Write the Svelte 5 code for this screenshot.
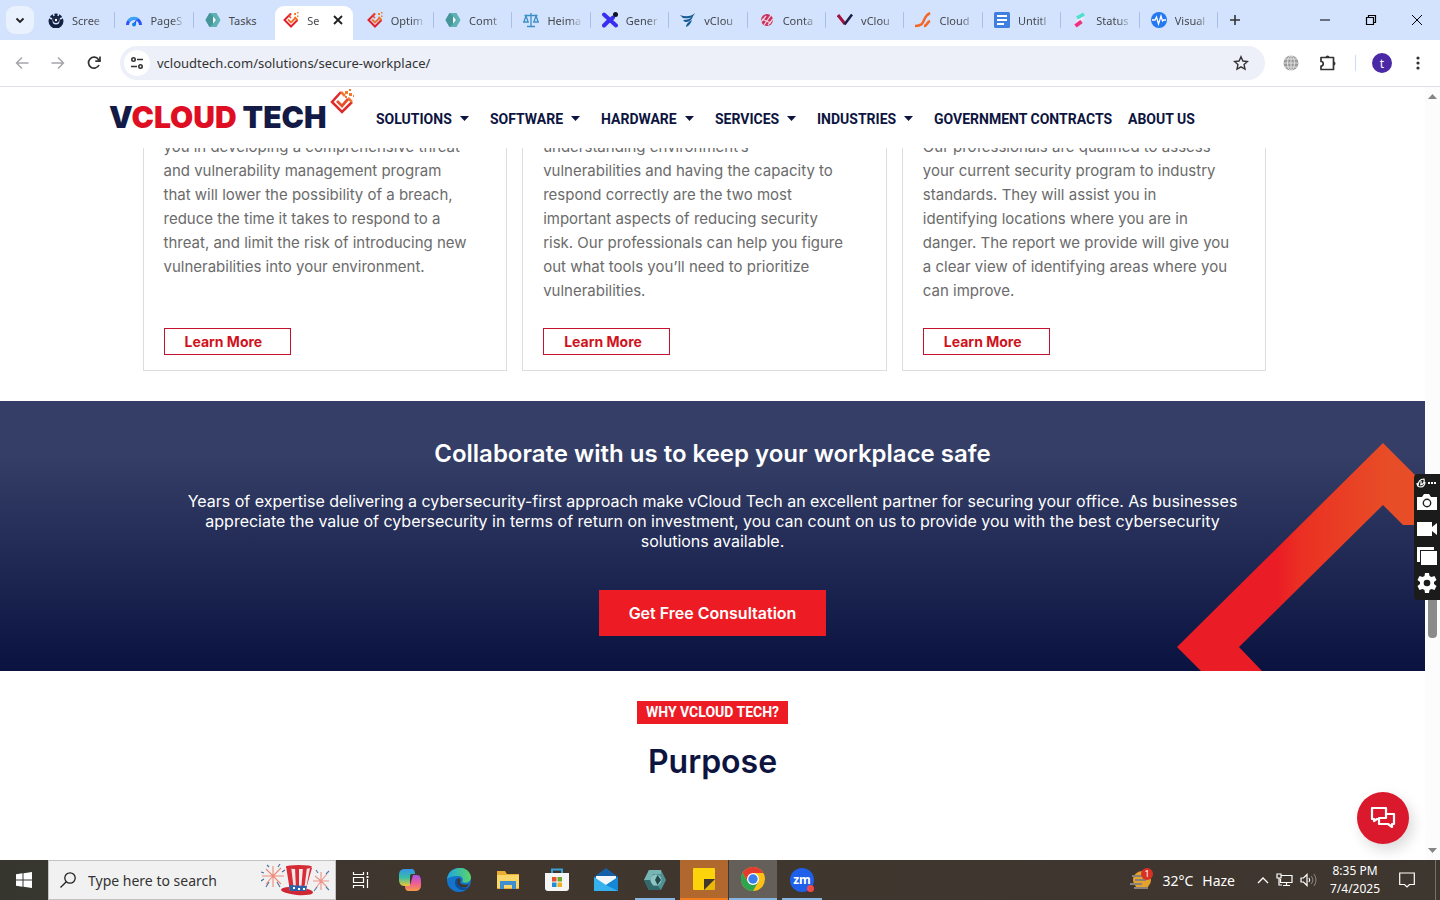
<script lang="ts">
	interface Tab {
		icon: string;
		title: string;
		active?: boolean;
	}

	const diamond =
		'<path d="M8 1.500 1.500 8 8 14.500 14.500 8" fill="none" stroke="#e0202a" stroke-width="2"/><path d="m5 7.500 3 3 4-4M14.500 8 11.500 5" fill="none" stroke="#f0702a" stroke-width="1.800"/><path d="M8 1.500 6 4l2 2" fill="none" stroke="#e5482a" stroke-width="1.500"/><path d="M11 1h2v2h-2zM14 0h1.500v1.500H14zM14 3.500h1.500V5H14z" fill="#f0802a"/>';
	const hex =
		'<path d="M4.500 1h7L15.500 8l-4 7h-7L.5 8z" fill="#5fb0b2"/><path d="M4.500 1 .5 8l4 7 3.500-3V4z" fill="#459699"/><path d="M8 4.500 11 8l-3 3.500z" fill="#f0fafa"/>';

	const icons: Record<string, string> = {
		diamond,
		hex,
		shot: '<circle cx="8" cy="9" r="5.500" fill="none" stroke="#14203f" stroke-width="4"/><circle cx="8" cy="8" r="3" fill="#14203f"/><path d="M0 5 4 7M16 5l-4 2M5 0l1 4M11 0l-1 4" stroke="#d3e3fd" stroke-width="1.500"/><circle cx="8" cy="8" r="1.200" fill="#fff"/>',
		gauge:
			'<path d="M1.500 13a6.500 6.500 0 0 1 13 0" fill="none" stroke="#2f50ff" stroke-width="3"/><path d="M2.500 9a6.500 6.500 0 0 1 9-1.500" fill="none" stroke="#39a6f5" stroke-width="3"/><path d="m7 12 4-5-1.500 6z" fill="#1457e6"/><circle cx="8" cy="12.500" r="2" fill="#1483e6"/>',
		scales:
			'<path d="M8 1v13M4 14.500h8M1.500 3.500h13M3 4 .8 10h4.400zM13 4l-2.200 6h4.400z" fill="none" stroke="#3c8fc4" stroke-width="1.300"/>',
		cross:
			'<path d="m2 2.500 12 11M2 13.500l4-4M10 6.500l1-1" fill="none" stroke="#3a2ff0" stroke-width="4" stroke-linecap="round"/><circle cx="13.500" cy="2.500" r="2.500" fill="#101020"/>',
		wing: '<path d="M0 3c5 2 11 2 15-2-2 5-7 6-12 5zM3 8c4 0 7-1 10-4-1 4-4 6-8 6zM6 15c0-3 2-5 6-7-1 3-3 6-6 7z" fill="#165a94"/>',
		ball: '<circle cx="8" cy="8" r="6" fill="#c8325c"/><path d="m2 10 5-6M5 13l7-10M9 13l5-6M3 7l9 4" stroke="#f3d5e2" stroke-width="1.300"/>',
		vee: '<path d="m1 3 7 9" stroke="#a3123c" stroke-width="3"/><path d="m7.500 12.500 7.500-10" stroke="#1d1d4b" stroke-width="2.500"/>',
		flare:
			'<path d="M0 14c8 0 8-4 10-8 1-3 3-4 5-5M9 14c3 0 3-4 6-5" fill="none" stroke="#f2682a" stroke-width="2.600"/>',
		docs: '<rect width="16" height="16" rx="1.500" fill="#3f7fe0"/><path d="M3 4h10M3 8h10M3 12h7" stroke="#fff" stroke-width="1.800"/>',
		status:
			'<path d="m5 6 7-4" stroke="#4fe0cf" stroke-width="3.500"/><path d="M4 9.500 12 6" stroke="#f6e8f3" stroke-width="2"/><path d="m3.500 14 6-4.500" stroke="#ee3280" stroke-width="4"/>',
		pulse:
			'<circle cx="8" cy="8" r="8" fill="#2478f2"/><path d="M1 8h3l1.500-3 2 7L10 4l1.500 5 1-1H15" fill="none" stroke="#fff" stroke-width="1.300"/>'
	};

	const tabs: Tab[] = [
		{ icon: 'shot', title: 'Scree' },
		{ icon: 'gauge', title: 'PageS' },
		{ icon: 'hex', title: 'Tasks' },
		{ icon: 'diamond', title: 'Se', active: true },
		{ icon: 'diamond', title: 'Optim' },
		{ icon: 'hex', title: 'Comt' },
		{ icon: 'scales', title: 'Heima' },
		{ icon: 'cross', title: 'Gener' },
		{ icon: 'wing', title: 'vClou' },
		{ icon: 'ball', title: 'Conta' },
		{ icon: 'vee', title: 'vClou' },
		{ icon: 'flare', title: 'Cloud' },
		{ icon: 'docs', title: 'Untitl' },
		{ icon: 'status', title: 'Status' },
		{ icon: 'pulse', title: 'Visual' }
	];

	const menu = [
		{ label: 'SOLUTIONS', sub: true },
		{ label: 'SOFTWARE', sub: true },
		{ label: 'HARDWARE', sub: true },
		{ label: 'SERVICES', sub: true },
		{ label: 'INDUSTRIES', sub: true },
		{ label: 'GOVERNMENT CONTRACTS', sub: false },
		{ label: 'ABOUT US', sub: false }
	];

	const cards = [
		`you in developing a comprehensive threat
and vulnerability management program
that will lower the possibility of a breach,
reduce the time it takes to respond to a
threat, and limit the risk of introducing new
vulnerabilities into your environment.`,
		`understanding environment’s
vulnerabilities and having the capacity to
respond correctly are the two most
important aspects of reducing security
risk. Our professionals can help you figure
out what tools you’ll need to prioritize
vulnerabilities.`,
		`Our professionals are qualified to assess
your current security program to industry
standards. They will assist you in
identifying locations where you are in
danger. The report we provide will give you
a clear view of identifying areas where you
can improve.`
	];

	const apps = [
		{
			name: 'Task View',
			state: '',
			svg: '<path d="M4.500 4v2.500h10V4M4.500 20v-2.500h10V20M4.500 9.500h10v5h-10zM18.500 4v3M18.500 11v9" fill="none" stroke="#fff" stroke-width="1.200"/><path d="M17.500 8h2v2h-2z" fill="#fff"/>'
		},
		{
			name: 'Copilot',
			state: '',
			svg: '<path d="M7 1h7c2 0 3 2 3 5h-3c-2 0-2 1-2 4v8H6c-3 0-5-3-5-6V7c0-4 2-6 6-6z" fill="url(#cpa)"/><path d="M17 23h-6c-3 0-4-2-4-5h3c2 0 2-1 3-4l2-7h4c3 0 4 3 4 6v4c0 4-2 6-6 6z" fill="url(#cpb)"/>'
		},
		{
			name: 'Microsoft Edge',
			state: '',
			svg: '<circle cx="12" cy="12" r="12" fill="#1474cc"/><path d="M0 11C2-3 22-4 24 9c0 5-5 7-9 5 2-3 0-6-4-6C6 8 2 9 0 11z" fill="url(#edge)"/><path d="M10 10c-5 5 0 13 7 12 2 0 4-1 5-3-4 2-9 1-10-4z" fill="#0b4e9e"/><path d="M11 10c3 0 3 3 2 5 2 2 6 2 9 1l-2 3c-6 2-12-3-9-9z" fill="#40362e"/>'
		},
		{
			name: 'File Explorer',
			state: '',
			svg: '<path d="M1 3h8l2 3h12v15H1z" fill="#e9ae32"/><path d="M1 7h22v13H1z" fill="#fbd668"/><path d="M4 13h16v8h-4v-4H8v4H4z" fill="#3f8fd0"/>'
		},
		{
			name: 'Microsoft Store',
			state: '',
			svg: '<path d="M7 6V1.500h10V6" fill="none" stroke="#39a2d8" stroke-width="2"/><path d="M0 5h24v15c0 2-1 3-3 3H3c-2 0-3-1-3-3z" fill="#f5f5f5"/><path d="M7 9h4.500v4.500H7z" fill="#e8502a"/><path d="M12.500 9H17v4.500h-4.500z" fill="#6ea92e"/><path d="M7 14.500h4.500V19H7z" fill="#258bd2"/><path d="M12.500 14.500H17V19h-4.500z" fill="#edb020"/>'
		},
		{
			name: 'Mail',
			state: '',
			svg: '<path d="M0 9 12 0l12 9v4H0z" fill="#1560a8"/><path d="M2 8h20v9H2z" fill="#f4f7fa"/><path d="M0 9l12 8L24 9v14H0z" fill="#35b2ee"/><path d="M24 9v14L12 17z" fill="#1488d6"/>'
		},
		{
			name: 'Time tracker',
			state: 'open',
			svg: '<path d="M6 2h12l5 10-5 10H6L1 12z" fill="#4f9294"/><path d="M6 2 1 12h6l3-6h8V2z" fill="#78b6b5"/><path d="M7 12 1 12l5 10h12l-3-4h-5z" fill="#33696d"/><circle cx="13" cy="12" r="5.500" fill="#8dc4c1"/><path d="m14.500 7 3.500 5-3.500 5-2.500-5z" fill="#24494d"/>'
		},
		{
			name: 'Sticky Notes',
			state: 'alert',
			svg: '<path d="M2 1h20q1 0 1 1v10L12 23H2q-1 0-1-1V2q0-1 1-1z" fill="#fbd40b"/><path d="M23 12v10q0 1-1 1H12z" fill="#e9b90a"/><path d="M12 12h11L12 23z" fill="#40382a"/>'
		},
		{
			name: 'Google Chrome',
			state: 'focus',
			svg: '<circle cx="12" cy="12" r="12" fill="#fbc116"/><path d="M1.600 6A12 12 0 0 1 22.400 6H12L6.800 15z" fill="#e33b2e"/><path d="M1.600 6A12 12 0 0 0 12 24l5.200-9H6.800z" fill="#2da44e"/><circle cx="12" cy="12" r="6" fill="#fff"/><circle cx="12" cy="12" r="4.700" fill="#3b7ded"/>'
		}
	];
</script>

<svelte:head>
	<title>Secure Workplace</title>
</svelte:head>

<svg class="defs" width="0" height="0" aria-hidden="true">
	<defs>
		<linearGradient id="cpa" x1="0" y1="0" x2="0" y2="1">
			<stop stop-color="#3494e8" />
			<stop offset="0.500" stop-color="#38bea6" />
			<stop offset="1" stop-color="#efc735" />
		</linearGradient>
		<linearGradient id="cpb" x1="0" y1="0" x2="0" y2="1">
			<stop stop-color="#a656e5" />
			<stop offset="0.500" stop-color="#ee5b98" />
			<stop offset="1" stop-color="#f59a44" />
		</linearGradient>
		<linearGradient id="edge">
			<stop stop-color="#1fa5df" />
			<stop offset="1" stop-color="#5ad568" />
		</linearGradient>
	</defs>
</svg>

<div class="screen">
	<div class="tabstrip">
		<button class="tab-search" aria-label="Search tabs">
			<svg width="10" height="10" viewBox="0 0 10 10"><path d="m1.500 3.500 3.500 3.500 3.500-3.500" fill="none" stroke="#1f1f1f" stroke-width="1.800" /></svg>
		</button>
		<div class="tabs">
			{#each tabs as tab, i}
				<button class="tab" class:active={tab.active} class:bare={i === 2}>
					<svg width="16" height="16" viewBox="0 0 16 16">{@html icons[tab.icon]}</svg>
					<span class="tab-title">{tab.title}</span>
					{#if tab.active}
						<svg width="10" height="10" viewBox="0 0 10 10"><path d="m1 1 8 8M9 1 1 9" stroke="#1f1f1f" stroke-width="1.800" /></svg>
					{/if}
				</button>
			{/each}
		</div>
		<button class="new-tab" aria-label="New tab">
			<svg width="12" height="12" viewBox="0 0 12 12"><path d="M6 1v10M1 6h10" stroke="#333" stroke-width="1.600" /></svg>
		</button>
		<div class="window-buttons">
			<button aria-label="Minimize"><svg width="12" height="12" viewBox="0 0 12 12"><path d="M1 6h10" stroke="#000" /></svg></button>
			<button aria-label="Restore"><svg width="12" height="12" viewBox="0 0 12 12"><path d="M1.500 3.500h7v7h-7zM3.500 3.500v-2h7v7h-2" fill="none" stroke="#000" stroke-width="1.200" /></svg></button>
			<button aria-label="Close"><svg width="12" height="12" viewBox="0 0 12 12"><path d="m1 1 10 10M11 1 1 11" stroke="#000" /></svg></button>
		</div>
	</div>

	<div class="toolbar">
		<button aria-label="Back"><svg width="16" height="16" viewBox="0 0 16 16"><path d="M14.500 8H2.500M8 2.500 2.500 8 8 13.500" fill="none" stroke="#a5a7aa" stroke-width="1.500" /></svg></button>
		<button aria-label="Forward"><svg width="16" height="16" viewBox="0 0 16 16"><path d="M1.500 8h12M8 2.500 13.500 8 8 13.500" fill="none" stroke="#a5a7aa" stroke-width="1.500" /></svg></button>
		<button class="reload" aria-label="Reload"><svg width="16" height="16" viewBox="0 0 16 16"><path d="M13 10A5.500 5.500 0 1 1 12.500 4.500L14 6M14 1.500V6.200H9.300" fill="none" stroke="#333" stroke-width="1.700" /></svg></button>
		<div class="omnibox">
			<button class="site-info" aria-label="Site information">
				<svg width="14" height="14" viewBox="0 0 14 14"><g fill="none" stroke="#333" stroke-width="1.600"><circle cx="3.500" cy="3.500" r="1.700" /><path d="M7 3.500h6M1 10.500h6" /><circle cx="10.500" cy="10.500" r="1.700" /></g></svg>
			</button>
			<input aria-label="Address" value="vcloudtech.com/solutions/secure-workplace/" />
			<button class="star" aria-label="Bookmark">
				<svg width="16" height="16" viewBox="0 0 16 16"><path d="m8 1.800 1.900 4.200 4.600.5-3.400 3.100.9 4.500L8 11.800l-4 2.300.9-4.500L1.500 6.500 6.100 6z" fill="none" stroke="#333" stroke-width="1.400" /></svg>
			</button>
		</div>
		<button class="globe" aria-label="Translate extension">
			<svg width="16" height="16" viewBox="0 0 16 16"><circle cx="8" cy="8" r="7.500" fill="#9b9b9b" /><g fill="none" stroke="#eee" stroke-width="0.800"><ellipse cx="8" cy="8" rx="3.500" ry="7.500" /><path d="M8 0v16M0 8h16M1 4h14M1 12h14" /></g></svg>
		</button>
		<button class="puzzle" aria-label="Extensions">
			<svg width="18" height="18" viewBox="0 0 18 18"><path d="M2 3.500h12.500v12H2v-3.500c3 0 3-4.500 0-4.500z" fill="none" stroke="#333" stroke-width="1.700" stroke-linejoin="round" /><path d="M6.500 3.500a2 2 0 0 1 4 0zM14.500 7.500a2 2 0 0 1 0 4z" fill="#333" /></svg>
		</button>
		<span class="divider"></span>
		<button class="avatar" aria-label="Profile t">t</button>
		<button class="more" aria-label="Menu">
			<svg width="4" height="16" viewBox="0 0 4 16" fill="#333"><circle cx="2" cy="3" r="1.600" /><circle cx="2" cy="8" r="1.600" /><circle cx="2" cy="13" r="1.600" /></svg>
		</button>
	</div>

	<div class="viewport">
		<main>
			<header>
				<a class="logo" href="/">
					<span><b>V</b>CLOUD <b>TECH</b></span>
					<svg width="26" height="26" viewBox="0 0 26 26">
						<path d="M12 3 3 13l10 10 10-10" fill="none" stroke="#dd2a2b" stroke-width="2.500" />
						<path d="m12 3 4 4M23 13l-4-4" fill="none" stroke="#ed782f" stroke-width="2.500" />
						<path d="m8 12 5 5 6-7" fill="none" stroke="#e84f2c" stroke-width="2.800" />
						<path d="M16 2h3v3h-3zM20 0h2v2h-2zM20 4h3v3h-3zM16 7h2v2h-2zM24 6h1v2h-1z" fill="#ee7b2e" />
					</svg>
				</a>
				<nav>
					{#each menu as item}
						<a href="/{item.label.toLowerCase().replace(' ', '-')}">
							{item.label}
							{#if item.sub}
								<svg width="9" height="5" viewBox="0 0 9 5"><path d="M0 0h9L4.500 5z" fill="#0d1440" /></svg>
							{/if}
						</a>
					{/each}
				</nav>
			</header>

			<section class="services">
				{#each cards as text}
					<article>
						<p>{text}</p>
						<a href="/contact">Learn More</a>
					</article>
				{/each}
			</section>

			<section class="banner">
				<svg class="arrow" width="248" height="228" viewBox="0 0 248 228">
					<defs>
						<linearGradient id="arrow">
							<stop offset="0.400" stop-color="#ea1c25" />
							<stop offset="0.500" stop-color="#eb3023" />
							<stop offset="0.850" stop-color="#e74d26" />
						</linearGradient>
					</defs>
					<path d="M206 0 0 204l24 24h61l-23-24L206 62l20 20h22V42z" fill="url(#arrow)" />
				</svg>
				<h2>Collaborate with us to keep your workplace safe</h2>
				<p>
					Years of expertise delivering a cybersecurity-first approach make vCloud Tech an excellent partner for securing your office. As businesses<br />
					appreciate the value of cybersecurity in terms of return on investment, you can count on us to provide you with the best cybersecurity<br />
					solutions available.
				</p>
				<a href="/consultation">Get Free Consultation</a>
			</section>

			<section class="why">
				<span>WHY VCLOUD TECH?</span>
				<h2>Purpose</h2>
			</section>

			<button class="chat" aria-label="Open chat">
				<svg width="26" height="24" viewBox="0 0 26 24"><g fill="none" stroke="#fff" stroke-width="2.200" stroke-linejoin="round"><path d="M9 13H7l-3 2v-2H2V2h14v6" /><path d="M16 8h8v10h-2v3l-4-3H9v-6h7z" /></g></svg>
			</button>
		</main>

		<div class="scrollbar">
			<svg width="9" height="5" viewBox="0 0 9 5"><path d="M0 5h9L4.500 0z" fill="#858585" /></svg>
			<div class="track"><div class="thumb"></div></div>
			<svg width="9" height="5" viewBox="0 0 9 5"><path d="M0 0h9L4.500 5z" fill="#858585" /></svg>
		</div>

		<div class="recorder">
			<svg width="22" height="10" viewBox="0 0 22 10"><path d="M2 8c0-4 2-7 6-7 1 3-1 6-4 6M1 5c0 3 2 4 4 4s4-2 4-5M5 3v3h2" fill="none" stroke="#fff" stroke-width="1.200" /><path d="M12 4h2v2h-2zM15 4h2v2h-2zM18 4h2v2h-2z" fill="#fff" /></svg>
			<button aria-label="Take screenshot"><svg width="20" height="16" viewBox="0 0 20 16"><path d="M0 3h5l2-3h5l2 3h6v13H0z" fill="#fff" /><circle cx="10" cy="9" r="3.700" fill="#fff" stroke="#222" stroke-width="1.400" /></svg></button>
			<button aria-label="Record video"><svg width="20" height="14" viewBox="0 0 20 14"><path d="M0 0h15v5l5-4v12l-5-4v5H0z" fill="#fff" /></svg></button>
			<button aria-label="Gallery"><svg width="20" height="18" viewBox="0 0 20 18"><path d="M0 0h17v3H3v12H0z" fill="#fff" /><path d="M4 4h16v14H4z" fill="#fff" /></svg></button>
			<button aria-label="Settings"><svg width="20" height="20" viewBox="0 0 20 20"><path d="M8 0h4l.5 3 2 1 3-1 2 4-2.500 2v2l2.500 2-2 4-3-1-2 1-.5 3H8l-.5-3-2-1-3 1-2-4L3 11V9L.5 7l2-4 3 1 2-1z" fill="#fff" /><circle cx="10" cy="10" r="3.300" fill="#1b1b1b" /></svg></button>
		</div>
	</div>

	<div class="taskbar">
		<button class="start" aria-label="Start">
			<svg width="16" height="16" viewBox="0 0 16 16"><path d="m0 2.300 6.500-1v6.200H0zM7.500 1.200 16 0v7.500H7.500zM0 8.500h6.500v6.200L0 13.700zM7.500 8.500H16V16l-8.500-1.200z" fill="#fff" /></svg>
		</button>
		<label class="search">
			<svg width="16" height="16" viewBox="0 0 16 16"><g fill="none" stroke="#222" stroke-width="1.300"><circle cx="10" cy="6" r="5.200" /><path d="M6.300 9.700.5 15.500" /></g></svg>
			<input aria-label="Search" placeholder="Type here to search" />
			<svg width="70" height="32" viewBox="0 0 70 32">
				<g fill="none" stroke-width="1.100">
					<path d="M12 12V2M12 12 5 5M12 12H1M12 12l-7 8M12 12v11M12 12l8 8M12 12h11M12 12l8-8" stroke="#ee8a78" />
					<path d="m8 3-2-2M3 9 0 8M17 3l2-3M8 18l-3 5M16 18l3 5M21 8l3-2M3 15l-3 2" stroke="#4c6c9a" />
					<path d="M60 17V8M60 17l-6-5M60 17h-8M60 17l-5 7M60 17v9M60 17l6 6M60 17h8M60 17l6-7" stroke="#ed9389" />
					<path d="m57 9-2-3M65 10l3-3M56 23l-3 4M65 23l3 3" stroke="#5576a5" />
				</g>
				<ellipse cx="36" cy="27" rx="16" ry="4" transform="rotate(5 36 27)" fill="#cf2834" />
				<path d="m25 2 26 2-6 23H29z" fill="#f3e9e7" />
				<path d="M25 2h5l3 25h-4zM34 3h4v24h-3zM42 3h4l-3 24h-3zM49 4l2 0-6 21z" fill="#d92c38" />
				<path d="m28 21 18 1-1 5H29z" fill="#2c62a9" />
				<ellipse cx="38" cy="3" rx="13" ry="2" fill="#d62a35" />
				<path d="M32 24h2M37 25h2M42 25h2" stroke="#fff" stroke-width="2" />
			</svg>
		</label>
		<div class="apps">
			{#each apps as app}
				<button class={app.state} aria-label={app.name}>
					<svg width="24" height="24" viewBox="0 0 24 24">{@html app.svg}</svg>
				</button>
			{/each}
			<button class="open" aria-label="Zoom"><span class="zoom">zm</span></button>
		</div>
		<div class="tray">
			<button class="weather">
				<svg width="24" height="24" viewBox="0 0 24 24"><circle cx="13" cy="12" r="9" fill="#e5a32e" /><path d="M3 8h11M6 12h11M1 16h12M5 20h14" stroke="#88827b" stroke-width="2" /><circle cx="18" cy="6" r="6" fill="#d93025" /><text x="18" y="9" text-anchor="middle" font-size="9" fill="#fff">1</text></svg>
				<span>32°C</span>
				<span>Haze</span>
			</button>
			<button aria-label="Show hidden icons"><svg width="12" height="8" viewBox="0 0 12 8"><path d="m1 7 5-5 5 5" fill="none" stroke="#fff" stroke-width="1.300" /></svg></button>
			<button aria-label="Network"><svg width="17" height="14" viewBox="0 0 17 14"><path d="M5 2.500h11v7H4.500V6M7 12.500h7M10.500 9.500v3M1 1h4v4H1zM3 5v7h3" fill="none" stroke="#fff" stroke-width="1.200" /></svg></button>
			<button aria-label="Volume"><svg width="17" height="14" viewBox="0 0 17 14"><path d="M1 5h2.500L7 1.500v11L3.500 9H1zM9 5q1.500 2 0 4" fill="none" stroke="#fff" stroke-width="1.200" /><path d="M11.500 3q3 4 0 8M14 1q4 6 0 12" fill="none" stroke="#8f8983" /></svg></button>
			<button class="clock"><span>8:35 PM</span><span>7/4/2025</span></button>
			<button class="notes" aria-label="Notifications"><svg width="16" height="16" viewBox="0 0 16 16"><path d="M.7 1h14.600v11.500h-4.800L8 15l-2.500-2.500H.7z" fill="none" stroke="#fff" stroke-width="1.200" /></svg></button>
			<span class="peek"></span>
		</div>
	</div>
</div>

<style>
	:global(body) {
		margin: 0;
		background: #fff;
	}
	.screen {
		display: flex;
		flex-direction: column;
		height: 100vh;
		overflow: hidden;
		font-family: 'Noto Sans', 'Open Sans', sans-serif;
		font-size: 12px;
	}
	.defs {
		position: absolute;
	}
	.screen :global(*) {
		box-sizing: border-box;
	}
	svg {
		flex: none;
		display: block;
	}
	button {
		display: flex;
		align-items: center;
		justify-content: center;
		flex: none;
		padding: 0;
		border: 0;
		background: none;
		font: inherit;
		color: inherit;
		cursor: pointer;
	}
	input {
		flex: 1;
		min-width: 0;
		padding: 0;
		border: 0;
		outline: 0;
		background: none;
		font: inherit;
	}
	a {
		text-decoration: none;
		color: inherit;
	}

	/* browser chrome */
	.tabstrip {
		display: flex;
		align-items: center;
		flex: none;
		height: 40px;
		padding-left: 6px;
		background: #d3e3fd;
	}
	.tab-search {
		width: 28px;
		height: 28px;
		margin-right: 3px;
		border-radius: 9px;
		background: #eaf1fe;
	}
	.tabs {
		display: flex;
		flex: 1;
		align-self: stretch;
		min-width: 0;
	}
	.tab {
		position: relative;
		flex: 1;
		min-width: 0;
		justify-content: flex-start;
		gap: 8px;
		padding: 0 8px 0 11px;
		font-size: 11px;
		color: #45484d;
	}
	.tab::after {
		content: '';
		position: absolute;
		right: 0;
		width: 1px;
		height: 16px;
		background: #a8c0e8;
	}
	.tab.bare::after,
	.tab.active::after {
		display: none;
	}
	.tab-title {
		flex: 1;
		min-width: 0;
		text-align: left;
		white-space: nowrap;
		mask-image: linear-gradient(to right, #000 60%, transparent);
	}
	.tab.bare .tab-title {
		mask-image: none;
	}
	.tab.active {
		align-self: flex-end;
		height: 34px;
		padding: 0 10px 6px 8px;
		margin: 0 3px;
		border-radius: 9px 9px 0 0;
		background: #fff;
	}
	.new-tab {
		width: 34px;
	}
	.window-buttons {
		display: flex;
		flex: none;
		margin-left: 50px;
	}
	.window-buttons button {
		width: 46px;
		height: 40px;
	}
	.toolbar {
		display: flex;
		align-items: center;
		flex: none;
		height: 47px;
		padding: 0 14px;
		border-bottom: 1px solid #dcdfe3;
		background: #fff;
	}
	.toolbar > button {
		width: 16px;
		margin-right: 20px;
	}
	.toolbar > .reload {
		margin-right: 18px;
	}
	.omnibox {
		display: flex;
		align-items: center;
		flex: 1;
		height: 34px;
		margin-right: 18px;
		padding: 0 16px 0 4px;
		border-radius: 17px;
		background: #edf0f8;
		font-size: 13px;
	}
	.omnibox input {
		color: #333;
	}
	.site-info {
		width: 26px;
		height: 26px;
		margin-right: 7px;
		border-radius: 50%;
		background: #fff;
	}
	.toolbar > .puzzle {
		width: 18px;
		margin-right: 18px;
	}
	.divider {
		width: 1px;
		height: 16px;
		margin-right: 16px;
		background: #cddcf5;
	}
	.toolbar > .avatar {
		width: 20px;
		height: 20px;
		margin-right: 18px;
		border-radius: 50%;
		background: #4b28a6;
		color: #fff;
	}
	.toolbar > .more {
		margin-right: 0;
	}

	/* website */
	.viewport {
		position: relative;
		display: flex;
		flex: 1;
		min-height: 0;
	}
	main {
		position: relative;
		flex: 1;
		min-width: 0;
		overflow: hidden;
		font-family: Inter, 'Open Sans', sans-serif;
		background: #fff;
	}
	header {
		display: flex;
		align-items: center;
		gap: 21px;
		height: 61px;
		padding-left: 109px;
	}
	.logo {
		display: flex;
		align-items: flex-start;
		align-self: flex-start;
		width: 246px;
		font-size: 30px;
		font-weight: 900;
		line-height: 36px;
		white-space: nowrap;
		color: #df0f23;
	}
	.logo span {
		flex: 1;
		min-width: 0;
		padding-top: 12px;
	}
	.logo svg {
		margin-top: 2px;
	}
	.logo b {
		font-weight: 900;
		color: #131a45;
	}
	nav {
		display: grid;
		grid-template-columns: 93px 90px 93px 81px 96px 173px auto;
		gap: 21px;
		font-family: Roboto, Inter, sans-serif;
		font-size: 14px;
		font-weight: 700;
		line-height: 20px;
		white-space: nowrap;
		color: #0d1440;
	}
	nav a {
		display: flex;
		align-items: center;
		justify-content: space-between;
		padding-top: 2px;
	}
	.services {
		display: grid;
		grid-template-columns: repeat(3, 1fr);
		gap: 15px;
		max-width: 1140px;
		margin: 0 auto 30px;
		padding-right: 16px;
		overflow: hidden;
	}
	article {
		display: flex;
		flex-direction: column;
		align-items: flex-start;
		justify-content: space-between;
		padding: 0 20px 15px;
		border: 1px solid #ddd;
		border-top: 0;
	}
	article p {
		margin: -13px 0 25px;
		font-size: 15px;
		line-height: 24px;
		white-space: pre;
		color: #6b6b6b;
	}
	article a {
		width: 127px;
		padding: 0 20px;
		border: 1px solid #c4122f;
		font-size: 14px;
		font-weight: 700;
		line-height: 25px;
		white-space: nowrap;
		color: #cf1220;
	}
	.banner {
		position: relative;
		display: flex;
		flex-direction: column;
		align-items: center;
		padding: 38px 20px 35px;
		background: linear-gradient(#343e66 20%, #0a1340);
		text-align: center;
		color: #fff;
	}
	.arrow {
		position: absolute;
		right: 0;
		bottom: 0;
	}
	.banner h2 {
		margin: 0 0 22px;
		font-size: 24px;
		font-weight: 600;
		line-height: 30px;
	}
	.banner p {
		margin: 0 0 39px;
		font-size: 16px;
		line-height: 20px;
	}
	.banner a {
		width: 227px;
		background: #ed1c24;
		font-size: 16px;
		font-weight: 600;
		line-height: 46px;
	}
	.why {
		display: flex;
		flex-direction: column;
		align-items: center;
		padding-top: 30px;
	}
	.why span {
		padding: 0 9px;
		background: #ed1c24;
		font-family: Roboto, Inter, sans-serif;
		font-size: 14px;
		font-weight: 700;
		line-height: 23px;
		color: #fff;
	}
	.why h2 {
		margin: 18px 0 0;
		font-size: 32px;
		font-weight: 600;
		line-height: 40px;
		color: #0d1440;
	}
	.chat {
		position: absolute;
		right: 16px;
		bottom: 16px;
		width: 52px;
		height: 52px;
		border-radius: 50%;
		background: #da1a2c;
		box-shadow: 4px 6px 14px rgba(0, 0, 0, 0.15);
	}
	.scrollbar {
		display: flex;
		flex-direction: column;
		align-items: center;
		width: 15px;
		padding: 7px 0;
		background: #fcfcfc;
	}
	.track {
		display: flex;
		flex: 1;
		flex-direction: column;
		justify-content: flex-end;
		padding-bottom: 210px;
	}
	.thumb {
		width: 9px;
		height: 130px;
		border-radius: 4px;
		background: #8b8b8b;
	}
	.recorder {
		position: absolute;
		top: 387px;
		right: 0;
		display: flex;
		flex-direction: column;
		align-items: center;
		width: 26px;
		padding: 4px 0;
		border-radius: 4px 0 0 4px;
		background: #1b1b1b;
	}
	.recorder button {
		height: 27px;
	}

	/* windows taskbar */
	.taskbar {
		display: flex;
		flex: none;
		height: 40px;
		background: linear-gradient(to right, #36362f, #40362e 30%, #3e372f);
		color: #fff;
	}
	.start {
		width: 48px;
	}
	.search {
		display: flex;
		align-items: center;
		width: 288px;
		padding: 0 4px 0 11px;
		border: 1px solid #c3c3c3;
		background: #f1f1f1;
		font-size: 14px;
	}
	.search input {
		margin-left: 12px;
	}
	.search input::placeholder {
		opacity: 1;
		color: #333;
	}
	.apps {
		display: flex;
		gap: 1px;
		padding-left: 1px;
	}
	.apps button {
		width: 48px;
	}
	.apps button.open {
		background: linear-gradient(#87b6e2, #87b6e2) center bottom / 40px 2px no-repeat;
	}
	.apps button.alert {
		border-bottom: 2px solid #f57c1c;
		background: #b0682f;
	}
	.apps button.focus {
		border-bottom: 2px solid #87b6e2;
		background: #655f59;
	}
	.zoom {
		position: relative;
		width: 24px;
		height: 24px;
		border-radius: 50%;
		background: #1e60ea;
		font-size: 12px;
		font-weight: 700;
		line-height: 23px;
	}
	.zoom::after {
		content: '';
		position: absolute;
		right: 0;
		bottom: 0;
		width: 7px;
		height: 7px;
		border-radius: 50%;
		background: #f24848;
	}
	.tray {
		display: flex;
		gap: 7px;
		margin-left: auto;
	}
	.weather {
		gap: 9px;
		margin-right: 15px;
		font-size: 14px;
	}
	.clock {
		flex-direction: column;
		width: 62px;
		line-height: 18px;
	}
	.notes {
		margin-left: 6px;
	}
	.peek {
		width: 5px;
		margin-left: 13px;
		border-left: 1px solid #77716b;
	}
</style>
